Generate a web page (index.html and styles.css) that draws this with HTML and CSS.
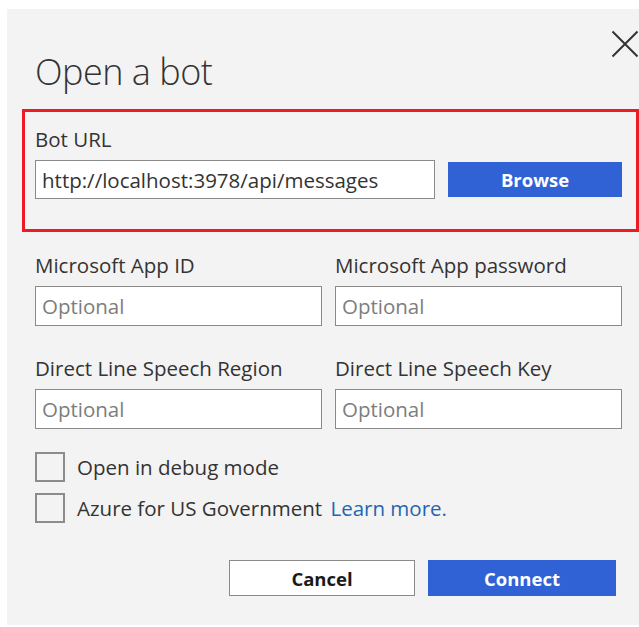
FILE: index.html
```html
<!DOCTYPE html>
<html lang="en">
<head>
<meta charset="utf-8">
<title>Open a bot</title>
<link rel="stylesheet" href="styles.css">
</head>
<body>
<div class="dialog" role="dialog" aria-labelledby="dlg-title">
  <button class="close" type="button" aria-label="Close">
    <svg width="28" height="28" viewBox="0 0 28 28" aria-hidden="true">
      <path d="M1.5 1.5 L26.5 26.5 M26.5 1.5 L1.5 26.5" stroke="#333" stroke-width="2" fill="none"/>
    </svg>
  </button>
  <h1 class="title" id="dlg-title">Open a bot</h1>

  <section class="bot-url">
    <label class="label" for="url">Bot URL</label>
    <div class="url-row">
      <input class="input url-input" id="url" type="text" value="http://localhost:3978/api/messages">
      <button class="btn btn-primary btn-browse" type="button">Browse</button>
    </div>
  </section>

  <div class="grid row-first">
    <div class="field">
      <label class="label" for="appid">Microsoft App ID</label>
      <input class="input" id="appid" type="text" placeholder="Optional">
    </div>
    <div class="field">
      <label class="label" for="apppw">Microsoft App password</label>
      <input class="input" id="apppw" type="text" placeholder="Optional">
    </div>
  </div>

  <div class="grid row-second">
    <div class="field">
      <label class="label" for="region">Direct Line Speech Region</label>
      <input class="input" id="region" type="text" placeholder="Optional">
    </div>
    <div class="field">
      <label class="label" for="key">Direct Line Speech Key</label>
      <input class="input" id="key" type="text" placeholder="Optional">
    </div>
  </div>

  <div class="checks">
    <label class="check">
      <span class="box"></span>
      <span class="check-text">Open in debug mode</span>
    </label>
    <label class="check">
      <span class="box"></span>
      <span class="check-text">Azure for US Government <a class="link" href="#">Learn more.</a></span>
    </label>
  </div>

  <div class="footer">
    <button class="btn btn-default btn-cancel" type="button">Cancel</button>
    <button class="btn btn-primary btn-connect" type="button">Connect</button>
  </div>
</div>
</body>
</html>
```

FILE: styles.css
```css
html, body {
  margin: 0;
  padding: 0;
  background: #ffffff;
}

body {
  font-family: "Open Sans", "Noto Sans", "DejaVu Sans", sans-serif;
  color: #333333;
  overflow: hidden;
}

.dialog {
  position: relative;
  box-sizing: border-box;
  margin: 9px 0 0 7px;
  height: 616px;
  padding: 41px 17px 0 28px;
  background: #f3f3f3;
}

.close {
  position: absolute;
  top: 21px;
  right: 0;
  width: 28px;
  height: 28px;
  padding: 0;
  border: 0;
  background: transparent;
  cursor: pointer;
}

.close svg {
  display: block;
}

.title {
  margin: 0;
  font-size: 36px;
  line-height: 44px;
  font-weight: 300;
  color: #333333;
  letter-spacing: -0.5px;
}

.label {
  display: block;
  font-size: 20.5px;
  line-height: 26px;
  margin-bottom: 8px;
  color: #333333;
}

.bot-url {
  margin: 15px -17px 0 -13px;
  padding: 14px 13px 30px 10px;
  border: 3px solid #ed1c24;
}

.url-row {
  display: flex;
  align-items: center;
  gap: 13px;
}

.input {
  box-sizing: border-box;
  display: block;
  width: 100%;
  height: 40px;
  margin: 0;
  padding: 0 6px;
  border: 1px solid #8a8a8a;
  background: #ffffff;
  font-family: inherit;
  font-size: 20.5px;
  color: #333333;
  outline: none;
}

.input::placeholder {
  color: #7d7d7d;
  opacity: 1;
}

.url-input {
  width: 400px;
  height: 39px;
  flex: none;
}

.btn {
  box-sizing: border-box;
  height: 36px;
  margin: 0;
  padding: 0;
  font-family: inherit;
  font-size: 18.5px;
  font-weight: 700;
  cursor: pointer;
}

.btn-primary {
  border: 0;
  background: #3062d6;
  color: #ffffff;
}

.btn-default {
  border: 1px solid #8a8a8a;
  background: #ffffff;
  color: #1a1a1a;
}

.btn-browse {
  width: 174px;
  height: 35px;
  flex: none;
}

.grid {
  display: grid;
  grid-template-columns: 1fr 1fr;
  column-gap: 13px;
}

.row-first {
  margin-top: 20px;
}

.row-second {
  margin-top: 29px;
}

.checks {
  margin-top: 23px;
  display: flex;
  flex-direction: column;
  gap: 11px;
}

.check {
  display: flex;
  align-items: center;
  gap: 12px;
  font-size: 20.5px;
  line-height: 30px;
  color: #333333;
}

.box {
  box-sizing: border-box;
  width: 30px;
  height: 30px;
  flex: none;
  border: 2px solid #8c8c8c;
  background: transparent;
}

.link {
  margin-left: 3px;
  color: #1f66b2;
  text-decoration: none;
}

.footer {
  margin-top: 37px;
  padding-right: 6px;
  display: flex;
  justify-content: flex-end;
  gap: 13px;
}

.btn-cancel {
  width: 186px;
}

.btn-connect {
  width: 188px;
}
```
